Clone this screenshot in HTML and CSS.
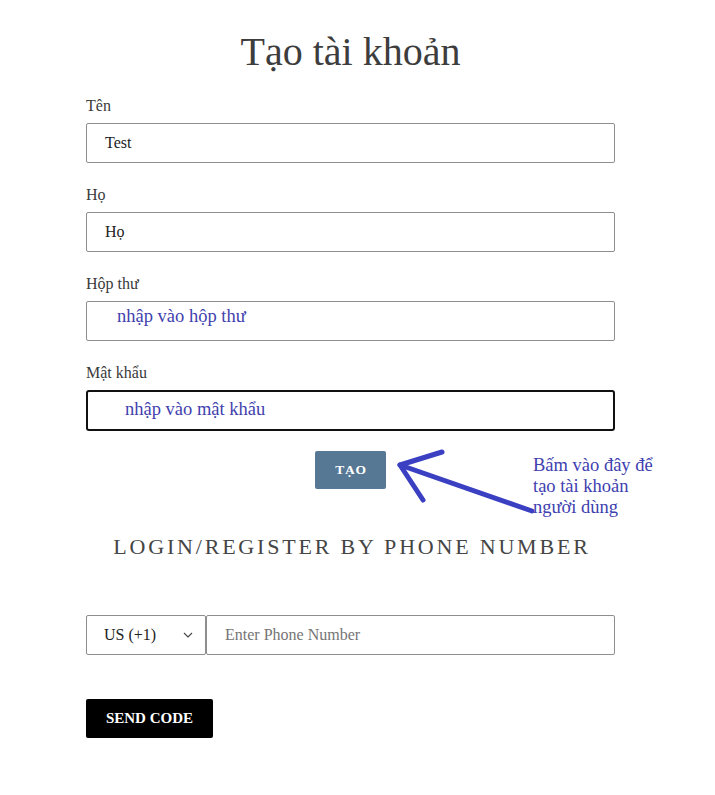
FILE: index.html
```html
<!DOCTYPE html>
<html lang="vi">
<head>
<meta charset="utf-8">
<title>Tạo tài khoản</title>
<link rel="stylesheet" href="styles.css">
</head>
<body>
<div class="page">
  <h1 class="title">Tạo tài khoản</h1>
  <form class="form">
    <div class="group">
      <label class="label">Tên</label>
      <div class="field">Test</div>
    </div>
    <div class="group">
      <label class="label">Họ</label>
      <div class="field">Họ</div>
    </div>
    <div class="group">
      <label class="label">Hộp thư</label>
      <div class="field field-note field-email">nhập vào hộp thư</div>
    </div>
    <div class="group">
      <label class="label">Mật khẩu</label>
      <div class="field field-note field-focus">nhập vào mật khẩu</div>
    </div>
    <div class="actions">
      <button type="button" class="btn-create">TẠO</button>
    </div>
  </form>

  <h2 class="phone-title">LOGIN/REGISTER BY PHONE NUMBER</h2>

  <div class="phone-row">
    <div class="country">
      <span>US (+1)</span>
      <svg class="chev" width="10" height="6" viewBox="0 0 10 6"><path d="M1 1 L5 5 L9 1" fill="none" stroke="#444" stroke-width="1.1"/></svg>
    </div>
    <div class="phone-input">Enter Phone Number</div>
  </div>

  <button type="button" class="btn-send">SEND CODE</button>

  <svg class="arrow" width="715" height="795" viewBox="0 0 715 795">
    <g fill="none" stroke="#3b40c2" stroke-width="5" stroke-linecap="round" stroke-linejoin="round">
      <path d="M532 511 L400 465"/>
      <path d="M442 452 L400 465 L423 500"/>
    </g>
  </svg>
  <div class="note">Bấm vào đây để<br>tạo tài khoản<br>người dùng</div>
</div>
</body>
</html>
```
FILE: styles.css
```css
html, body {
  margin: 0;
  padding: 0;
  background: #ffffff;
}
body {
  font-family: "Liberation Serif", "Times New Roman", serif;
  color: #3a3a3a;
}
.page {
  position: relative;
  width: 715px;
  height: 795px;
  box-sizing: border-box;
  padding: 28px 0 0 86px;
}
.title {
  width: 529px;
  margin: 0 0 20px 0;
  font-size: 40px;
  line-height: 48px;
  font-weight: normal;
  text-align: center;
  color: #3d3d3d;
}
.form {
  width: 529px;
  display: flex;
  flex-direction: column;
  margin: 0;
}
.group {
  display: flex;
  flex-direction: column;
  margin-bottom: 22px;
}
.label {
  font-size: 16px;
  line-height: 20px;
  margin-bottom: 7px;
  color: #3a3a3a;
}
.field {
  height: 40px;
  box-sizing: border-box;
  border: 1px solid #8e8e8e;
  border-radius: 2px;
  padding: 0 18px;
  font-size: 16px;
  line-height: 38px;
  color: #222;
}
.field-note {
  color: #3f3fae;
  font-size: 18.5px;
}
.field-email {
  padding-left: 30px;
  line-height: 28px;
}
.field-focus {
  height: 41px;
  border: 2px solid #111;
  border-radius: 3px;
  padding-left: 37px;
  line-height: 34px;
}
.actions {
  display: flex;
  justify-content: center;
  margin-top: -2px;
}
.btn-create {
  width: 71px;
  height: 38px;
  border: none;
  border-radius: 2px;
  background: #577894;
  color: #ffffff;
  font-family: "Liberation Serif", "Times New Roman", serif;
  font-weight: bold;
  font-size: 13.5px;
  letter-spacing: 0.8px;
  padding: 0 0 0 1px;
}
.phone-title {
  width: 529px;
  margin: 43px 0 0 0;
  font-size: 22px;
  line-height: 30px;
  font-weight: normal;
  letter-spacing: 2.8px;
  text-indent: 3px;
  text-align: center;
  color: #454545;
}
.phone-row {
  width: 529px;
  display: flex;
  margin-top: 53px;
  height: 40px;
}
.country {
  width: 120px;
  box-sizing: border-box;
  border: 1px solid #8e8e8e;
  border-radius: 2px;
  display: flex;
  align-items: center;
  justify-content: space-between;
  padding: 0 12px 0 17px;
  font-size: 16px;
  color: #222;
}
.chev {
  display: block;
}
.phone-input {
  flex: 1;
  box-sizing: border-box;
  border: 1px solid #8e8e8e;
  border-radius: 2px;
  padding: 0 18px;
  font-size: 16px;
  line-height: 38px;
  color: #757575;
}
.btn-send {
  display: block;
  margin-top: 44px;
  width: 127px;
  height: 39px;
  border: none;
  border-radius: 2px;
  background: #000000;
  color: #ffffff;
  font-family: "Liberation Serif", "Times New Roman", serif;
  font-weight: bold;
  font-size: 15px;
  padding: 0;
}
.arrow {
  position: absolute;
  left: 0;
  top: 0;
  pointer-events: none;
}
.note {
  position: absolute;
  left: 533px;
  top: 455px;
  font-size: 18.5px;
  line-height: 21px;
  color: #4040b0;
}
```
